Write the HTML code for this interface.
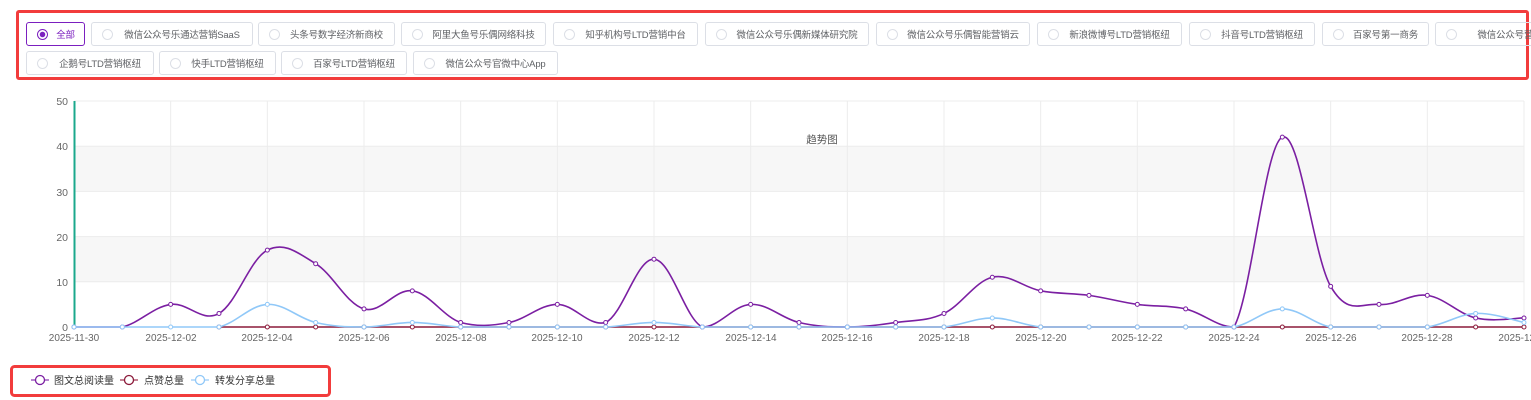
<!DOCTYPE html>
<html><head><meta charset="utf-8"><style>
body{margin:0;width:1531px;height:400px;background:#fff;overflow:hidden;font-family:"Liberation Sans","Noto Sans CJK SC",sans-serif;position:relative}
.box{position:absolute;border:3px solid #f23c3c;border-radius:3px}
.chip{position:absolute;height:24px;border:1px solid #dcdfe6;border-radius:3px;font-size:9.5px;color:#606266;line-height:22px;padding-top:2px;box-sizing:border-box;padding-left:20px;text-align:center;white-space:nowrap;overflow:hidden;letter-spacing:-0.2px}
.chip:before{content:"";position:absolute;left:10px;top:6px;width:9px;height:9px;border:1px solid #dcdfe6;border-radius:50%}
.chip.on{border-color:#7b1fbf;color:#7b1fbf}
.chip.on:before{border-color:#7b1fbf;background:radial-gradient(circle,#7b1fbf 0 2.5px,#fff 3px)}
svg{position:absolute;left:0;top:0}
</style></head><body>
<div class="box" style="left:16px;top:10px;width:1507px;height:64px"></div>
<div class="chip on" style="left:26px;top:22px;width:59px">全部</div>
<div class="chip" style="left:91px;top:22px;width:162px">微信公众号乐通达营销SaaS</div>
<div class="chip" style="left:258px;top:22px;width:137px">头条号数字经济新商校</div>
<div class="chip" style="left:401px;top:22px;width:145px">阿里大鱼号乐偶网络科技</div>
<div class="chip" style="left:553px;top:22px;width:145px">知乎机构号LTD营销中台</div>
<div class="chip" style="left:705px;top:22px;width:164px">微信公众号乐偶新媒体研究院</div>
<div class="chip" style="left:876px;top:22px;width:154px">微信公众号乐偶智能营销云</div>
<div class="chip" style="left:1037px;top:22px;width:145px">新浪微博号LTD营销枢纽</div>
<div class="chip" style="left:1189px;top:22px;width:126px">抖音号LTD营销枢纽</div>
<div class="chip" style="left:1322px;top:22px;width:107px">百家号第一商务</div>
<div class="chip" style="left:1435px;top:22px;width:130px">微信公众号营销</div>
<div class="chip" style="left:26px;top:51px;width:128px">企鹅号LTD营销枢纽</div>
<div class="chip" style="left:159px;top:51px;width:117px">快手LTD营销枢纽</div>
<div class="chip" style="left:281px;top:51px;width:126px">百家号LTD营销枢纽</div>
<div class="chip" style="left:413px;top:51px;width:145px">微信公众号官微中心App</div>

<svg width="1531" height="400" font-family="Liberation Sans, Noto Sans CJK SC, sans-serif">
<rect x="74" y="146.6" width="1450" height="45.2" fill="#f7f7f7"/>
<rect x="74" y="237" width="1450" height="45.2" fill="#f7f7f7"/>
<g stroke="#ececec" stroke-width="1" id="grid"></g>
<line x1="74.5" y1="101" x2="74.5" y2="327" stroke="#1ba88c" stroke-width="2"/>
<g font-size="10.5" fill="#666" text-anchor="end">
<text x="68" y="105">50</text><text x="68" y="150">40</text><text x="68" y="196">30</text><text x="68" y="241">20</text><text x="68" y="286">10</text><text x="68" y="331">0</text>
</g>
<g font-size="10" fill="#666" text-anchor="middle">
<text x="74" y="341">2025-11-30</text><text x="171" y="341">2025-12-02</text><text x="267" y="341">2025-12-04</text><text x="364" y="341">2025-12-06</text><text x="461" y="341">2025-12-08</text><text x="557" y="341">2025-12-10</text><text x="654" y="341">2025-12-12</text><text x="751" y="341">2025-12-14</text><text x="847" y="341">2025-12-16</text><text x="944" y="341">2025-12-18</text><text x="1041" y="341">2025-12-20</text><text x="1137" y="341">2025-12-22</text><text x="1234" y="341">2025-12-24</text><text x="1331" y="341">2025-12-26</text><text x="1427" y="341">2025-12-28</text><text x="1524" y="341">2025-12-30</text>
</g>
<text x="822" y="143" font-size="10.5" fill="#555" text-anchor="middle">趋势图</text>
<g id="series"></g>
<rect x="11.5" y="366.5" width="318" height="29" rx="3" fill="none" stroke="#f23c3c" stroke-width="3"/>
<g font-size="10" fill="#333">
<line x1="31" y1="380" x2="49" y2="380" stroke="#a05cc0" stroke-width="1.5"/><circle cx="40" cy="380" r="4.5" fill="#fff" stroke="#7b1fa2" stroke-width="1.3"/><text x="54" y="384">图文总阅读量</text>
<line x1="120" y1="380" x2="138" y2="380" stroke="#b05a70" stroke-width="1.5"/><circle cx="129" cy="380" r="4.5" fill="#fff" stroke="#8b1a3a" stroke-width="1.3"/><text x="144" y="384">点赞总量</text>
<line x1="191" y1="380" x2="209" y2="380" stroke="#a8d4fa" stroke-width="1.5"/><circle cx="200" cy="380" r="4.5" fill="#fff" stroke="#90c8f8" stroke-width="1.3"/><text x="215" y="384">转发分享总量</text>
</g>
</svg>
<script>
var NS="http://www.w3.org/2000/svg",dx=48.333;
var g=document.getElementById('grid');
function el(t,a,p){var e=document.createElementNS(NS,t);for(var k in a)e.setAttribute(k,a[k]);p.appendChild(e);return e;}
for(var v=0;v<=50;v+=10){var y=327-v*4.52;el('line',{x1:74,x2:1524,y1:y,y2:y},g);}
for(var i=2;i<=30;i+=2){var x=74+i*dx;el('line',{x1:x,x2:x,y1:101,y2:327},g);}
var P=[0,0,5,3,17,14,4,8,1,1,5,1,15,0,5,1,0,1,3,11,8,7,5,4,0,42,9,5,7,2,2];
var B=[0,0,0,0,5,1,0,1,0,0,0,0,1,0,0,0,0,0,0,2,0,0,0,0,0,4,0,0,0,3,1];
var R=[];for(i=0;i<=30;i++)R.push(0);
var s=document.getElementById('series');
function draw(d,c,start){var pts=[];for(var i=start;i<d.length;i++)pts.push([74+i*dx,327-d[i]*4.52]);
var n=pts.length,k=0.18;
var p='M'+pts[0][0]+','+pts[0][1];
for(i=1;i<n;i++){var p0=pts[Math.max(0,i-2)],a=pts[i-1],b=pts[i],p3=pts[Math.min(n-1,i+1)];
var c1=[a[0]+(b[0]-p0[0])*k,Math.min(327,a[1]+(b[1]-p0[1])*k)],c2=[b[0]-(p3[0]-a[0])*k,Math.min(327,b[1]-(p3[1]-a[1])*k)];
p+='C'+c1[0]+','+c1[1]+' '+c2[0]+','+c2[1]+' '+b[0]+','+b[1];}
el('path',{d:p,fill:'none',stroke:c,'stroke-width':1.6},s);
pts.forEach(function(q){el('circle',{cx:q[0],cy:q[1],r:2,fill:'#fff',stroke:c,'stroke-width':1},s);});}
draw(R,'#8b1a3a',3);draw(P,'#7b1fa2',0);draw(B,'#90c8f8',0);
</script>
</body></html>
